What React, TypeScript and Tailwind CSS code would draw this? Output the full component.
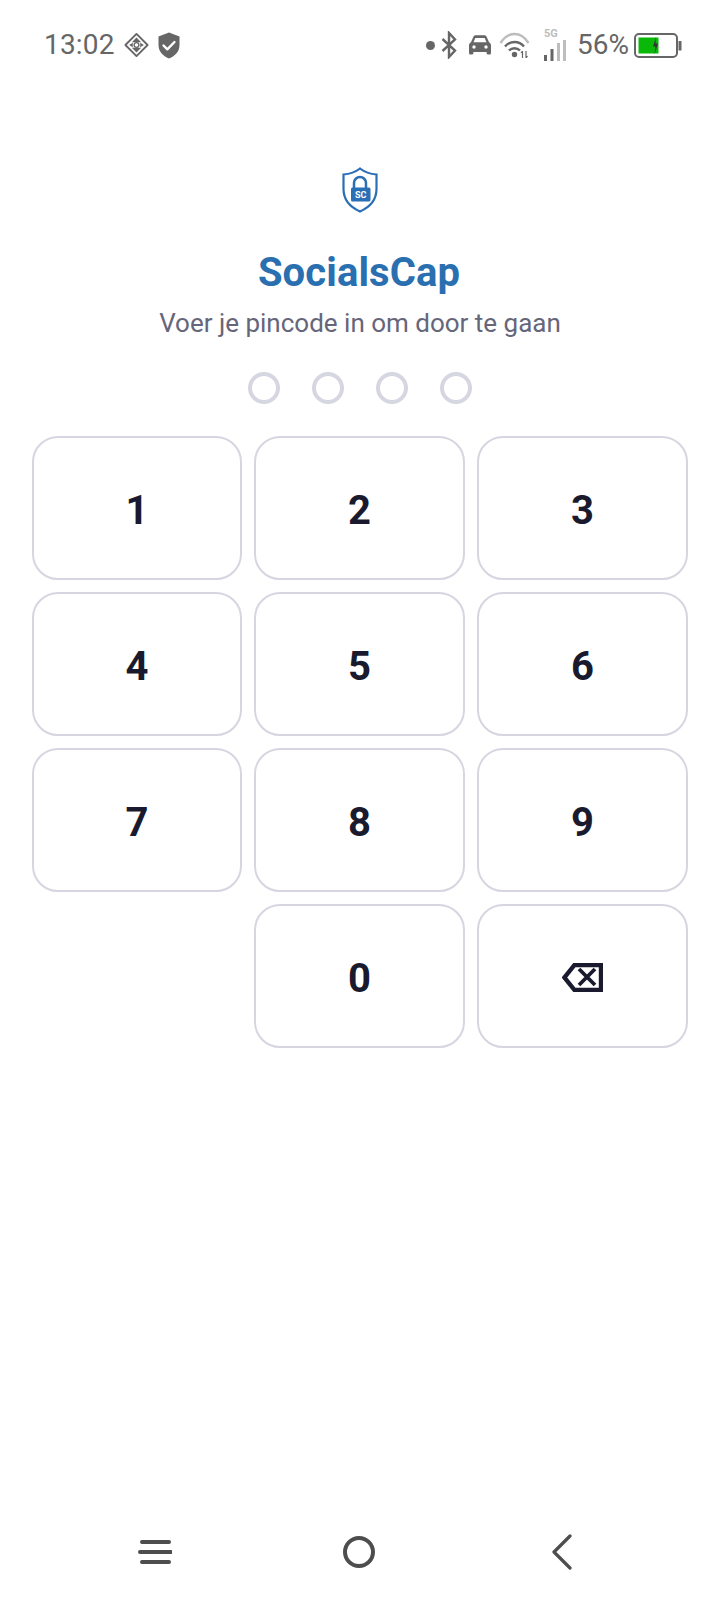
const keys = ["1", "2", "3", "4", "5", "6", "7", "8", "9"]

function KeyButton({ children }: { children: React.ReactNode }) {
  return (
    <button className="h-[144px] flex items-center justify-center rounded-[26px] border-2 border-[#d6d6e1] bg-white text-[40px] leading-none font-bold text-[#1a1a2e]">
      {children}
    </button>
  )
}

function StatusLeft() {
  return (
    <div className="flex items-center">
      <span className="text-[28px] leading-none text-[#666666] tracking-[0.2px]">13:02</span>
      <svg className="ml-[9px]" width="25" height="26" viewBox="0 0 27 27" fill="none">
        <path d="M13.5 1.5 25.5 13.5 13.5 25.5 1.5 13.5Z" stroke="#666" strokeWidth="2" strokeLinejoin="round" />
        <path d="M13.5 5.500 18.500 10.500H8.500ZM5.500 13.500l4-2.500v5ZM21.500 13.500l-4-2.500v5ZM13.500 21.500 8.500 16.500h10Z" fill="#666" />
        <circle cx="13.5" cy="13.5" r="2.6" fill="#fff" stroke="#666" strokeWidth="1.4" />
      </svg>
      <svg className="ml-[9px]" width="22" height="27" viewBox="0 0 22 27">
        <path d="M11 .5 21.5 4.5V13c0 6.400-4.300 11-10.500 13.500C4.800 24 .5 19.400.5 13V4.500Z" fill="#666" />
        <path d="M5.500 13.500 9.300 17.300 16.500 10" fill="none" stroke="#fff" strokeWidth="2.400" strokeLinecap="round" strokeLinejoin="round" />
      </svg>
    </div>
  )
}

function StatusRight() {
  return (
    <div className="flex items-center">
      <span className="w-[9px] h-[9px] rounded-full bg-[#666666]" />
      <svg className="ml-[6px]" width="16" height="28" viewBox="0 0 16 28" fill="none">
        <path d="M1.500 8 14 19.500 8 26V2l6 6.500L1.500 20" stroke="#666" strokeWidth="2.400" />
      </svg>
      <svg className="ml-[12px]" width="22" height="20" viewBox="0 0 22 20">
        <path d="M4.500 1.500C5 .7 5.800.3 6.700.3h8.600c.9 0 1.700.4 2.200 1.200L20 7.300c1.200.6 2 1.800 2 3.200V18a1.500 1.500 0 0 1-1.500 1.500h-1.400A1.500 1.500 0 0 1 17.600 18v-1H4.400v1a1.500 1.500 0 0 1-1.500 1.500H1.500A1.500 1.500 0 0 1 0 18v-7.500C0 9.100.8 7.900 2 7.300Z" fill="#666" />
        <path d="M4.500 7.300 6.300 3h9.400l1.800 4.300Z" fill="#fff" />
        <circle cx="5" cy="12" r="1.700" fill="#fff" />
        <circle cx="17" cy="12" r="1.700" fill="#fff" />
      </svg>
      <svg className="ml-[8px]" width="31" height="26" viewBox="0 0 31 26" fill="none">
        <path d="M1.500 11C9 -1 22 -1 29.500 11" stroke="#bdbdbd" strokeWidth="2.400" />
        <path d="M6 14.500C11 8.500 20 8.500 25 14.500" stroke="#666" strokeWidth="2.400" />
        <path d="M10 18.500c3-3 8-3 11 0" stroke="#666" strokeWidth="2.400" />
        <circle cx="15.500" cy="22.500" r="2.700" fill="#666" />
        <path d="M23.500 26V19M23.500 19l-1.500 2M27 19v7M27 26l1.500-2" stroke="#666" strokeWidth="1.200" />
      </svg>
      <div className="ml-[14px] relative w-[22px] h-[31px]">
        <span className="absolute -top-[2px] left-0 text-[11px] leading-[12px] font-bold text-[#bdbdbd]">5G</span>
        <svg className="absolute bottom-0 left-0" width="22" height="21" viewBox="0 0 22 21">
          <rect x="0" y="15" width="3" height="6" fill="#666" />
          <rect x="6.500" y="9" width="3" height="12" fill="#666" />
          <rect x="13" y="3" width="3" height="18" fill="#bdbdbd" />
          <rect x="19" y="0" width="3" height="21" fill="#bdbdbd" />
        </svg>
      </div>
      <span className="ml-[11px] text-[28px] leading-none text-[#666666]">56%</span>
      <svg className="ml-[5px]" width="48" height="25" viewBox="0 0 48 25">
        <rect x="1" y="1" width="42" height="23" rx="4" fill="none" stroke="#666" strokeWidth="2" />
        <rect x="4.500" y="4.500" width="20" height="16" fill="#0ab80a" />
        <rect x="44.500" y="8" width="3" height="9.500" fill="#666" />
        <path d="M22 4 19 13.500H21.500L20.500 21.500 24 10.500H21.500Z" fill="#333" />
      </svg>
    </div>
  )
}

function Logo() {
  return (
    <svg width="36" height="46" viewBox="0 0 36 46">
      <path d="M18 1.500C22.500 5 27.500 7 34.500 7.500V22C34.500 32.500 28 40 18 44.500 8 40 1.500 32.500 1.500 22V7.500C8.500 7 13.500 5 18 1.500Z" fill="#fff" stroke="#2a6fb5" strokeWidth="2.200" />
      <path d="M12 21v-5a6 6 0 0 1 12 0v5" fill="none" stroke="#2a6fb5" strokeWidth="2.500" />
      <rect x="9" y="20.500" width="19.500" height="14" rx="1.500" fill="#2a6fb5" />
      <text x="18.750" y="31" textAnchor="middle" fontSize="9" fontWeight="700" fill="#fff" fontFamily="Roboto, sans-serif">SC</text>
    </svg>
  )
}

export default function App() {
  return (
    <div className="w-[720px] h-[1600px] flex flex-col bg-white font-['Roboto',sans-serif]">
      <div className="h-[90px] flex items-center justify-between pl-[44px] pr-[38px]">
        <StatusLeft />
        <StatusRight />
      </div>

      <div className="flex-1 flex flex-col items-center pt-[77px] px-[32px]">
        <Logo />
        <h1 className="mt-[33px] mr-[2px] text-[40px] leading-[54px] font-bold tracking-[0.1px] text-[#2a6fb0]">SocialsCap</h1>
        <p className="mt-[6px] text-[26px] leading-[34px] text-[#66667a]">Voer je pincode in om door te gaan</p>
        <div className="mt-[32px] flex gap-[32px]">
          {[0, 1, 2, 3].map((d) => (
            <span key={d} className="w-[32px] h-[32px] rounded-full border-[4px] border-[#d6d6e1]" />
          ))}
        </div>
        <div className="mt-[32px] w-full grid grid-cols-[210px_211px_211px] gap-3">
          {keys.map((k) => (
            <KeyButton key={k}>
              <span className="block pt-[6px]">{k}</span>
            </KeyButton>
          ))}
          <div />
          <KeyButton>
            <span className="block pt-[6px]">0</span>
          </KeyButton>
          <KeyButton>
            <svg className="mt-[2px]" width="41" height="29" viewBox="0 0 41 29" fill="none" stroke="#1a1a2e">
              <path d="M39 2H12.500L2.500 14.500 12.500 27H39Z" strokeWidth="4.400" />
              <path d="M17 6 33 22M33 6 17 22" strokeWidth="3.800" />
            </svg>
          </KeyButton>
        </div>
      </div>

      <div className="h-[96px] flex items-start pt-[31px] pl-[53px]">
        <div className="w-[204px] h-[34px] flex items-center justify-center">
          <svg width="34" height="26" viewBox="0 0 34 26" stroke="#4d4d4d" strokeWidth="4" strokeLinecap="round">
            <path d="M4 3H31M2 13H33M4 23H31" />
          </svg>
        </div>
        <div className="w-[204px] h-[34px] flex items-center justify-center">
          <span className="w-[32px] h-[32px] rounded-full border-[4px] border-[#4d4d4d]" />
        </div>
        <div className="w-[202px] h-[34px] flex items-center justify-center">
          <svg width="22" height="36" viewBox="0 0 22 36" fill="none" stroke="#4d4d4d" strokeWidth="3.200" strokeLinecap="round" strokeLinejoin="round">
            <path d="M19 2 3 18 19 34" />
          </svg>
        </div>
      </div>
    </div>
  )
}
